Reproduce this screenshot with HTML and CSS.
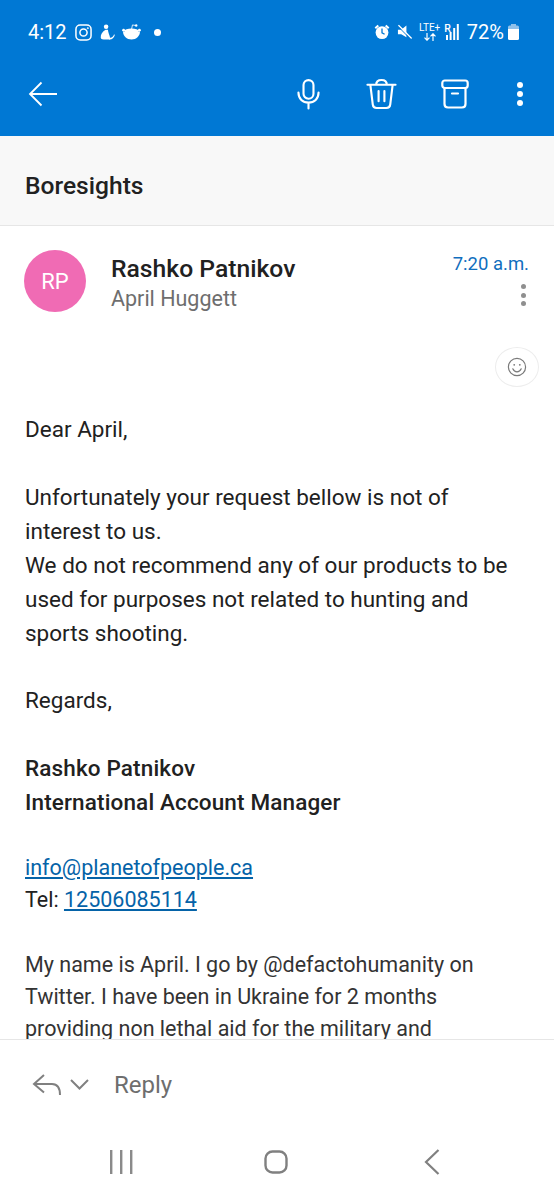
FILE: index.html

```html
<!DOCTYPE html>
<html lang="en">
<head>
  <meta charset="UTF-8">
  <meta name="viewport" content="width=device-width, initial-scale=1.0">
  <title>Boresights</title>
  <link rel="stylesheet" href="styles.css">
</head>
<body>
  <div class="phone">
    <header class="app-header">
      <div class="status-bar">
        <div class="status-left">
          <span class="status-time">4:12</span>
          <svg class="ic" width="17" height="17" viewBox="0 0 18 18" fill="none" stroke="#fff" stroke-width="1.6"><rect x="1" y="1" width="16" height="16" rx="4.5"/><circle cx="9" cy="9" r="3.8"/><circle cx="13.6" cy="4.4" r=".7" fill="#fff" stroke-width=".6"/></svg>
          <svg class="ic" width="15" height="16" viewBox="0 0 16 17" fill="#fff"><circle cx="6.5" cy="3" r="2.4"/><path d="M6 6 C2.5 8 .5 11 .8 14.5 C1 16 3 16.5 6 16.5 L10 16.5 C11.5 16.5 10.5 13 9.5 10.5 C9 9 8.5 7 8.5 6 Z"/><path d="M10 14.5 C12.5 15 14.2 13.5 15 11 L15.8 11.8 C15 15 12.5 17 9.5 16.5 Z"/></svg>
          <svg class="ic" width="19" height="16" viewBox="0 0 20 17" fill="#fff"><path d="M1 8 H19 C19 13 15 16.5 10 16.5 C5 16.5 1 13 1 8 Z"/><ellipse cx="10" cy="7.5" rx="7.5" ry="2.6"/><circle cx="1.6" cy="6.6" r="1.5"/><circle cx="18.4" cy="6.6" r="1.5"/><path d="M10 6 L11 1 L14.5 1.6" fill="none" stroke="#fff" stroke-width=".9"/><circle cx="15" cy="1.6" r="1.3"/></svg>
          <span class="status-dot"></span>
        </div>
        <div class="status-right">
          <svg class="ic" width="16" height="16" viewBox="0 0 16 16" fill="#fff"><circle cx="8" cy="8.6" r="6.4"/><path d="M.6 3.6 L3.6 .8 L5 2.2 L2 5 Z M15.4 3.6 L12.4 .8 L11 2.2 L14 5 Z"/><path d="M8 4.6 V8.8 L10.6 10.2" fill="none" stroke="#0078d4" stroke-width="1.3"/></svg>
          <svg class="ic mute" width="16" height="16" viewBox="0 0 17 16" fill="#fff"><path d="M1 5.5 H4.5 L10 1 V13.5 L4.5 10.5 H1 Z"/><path d="M1.5 .8 L15.5 15" stroke="#fff" stroke-width="1.6"/><path d="M.8 1.8 L14.8 16" stroke="#0078d4" stroke-width="1"/></svg>
          <span class="net"><span>LTE+</span><svg width="14" height="8" viewBox="0 0 14 8" fill="none" stroke="#fff" stroke-width="1.2"><path d="M4 0 V7 M1.5 4.6 L4 7.2 L6.5 4.6 M10 8 V1 M7.5 3.4 L10 .8 L12.5 3.4"/></svg></span>
          <span class="signal"><span class="r">R</span><svg width="14" height="16" viewBox="0 0 14 16" fill="#fff"><rect x="0" y="11" width="2" height="5"/><rect x="3.6" y="8" width="2" height="8"/><rect x="7.2" y="4" width="2" height="12"/><rect x="10.8" y="0" width="2" height="16"/></svg></span>
          <span class="status-batt">72%</span>
          <svg class="ic" width="11" height="16" viewBox="0 0 11 16"><path d="M3 0 H8 V1.5 H9.5 Q11 1.5 11 3 V5 H0 V3 Q0 1.5 1.5 1.5 H3 Z" fill="#8fc1ea"/><path d="M0 5 H11 V14.5 Q11 16 9.5 16 H1.5 Q0 16 0 14.5 Z" fill="#fff"/></svg>
        </div>
      </div>
      <div class="toolbar">
        <svg class="back" width="30" height="26" viewBox="0 0 30 26" fill="none" stroke="#fff" stroke-width="1.8"><path d="M29 13 H2 M13.5 1.5 L2 13 L13.5 24.5"/></svg>
        <div class="toolbar-actions">
          <svg width="23" height="32" viewBox="0 0 24 32" fill="none" stroke="#fff" stroke-width="2.2" stroke-linecap="round"><rect x="6.8" y="1.5" width="10.4" height="19.5" rx="5.2"/><path d="M1.5 14.5 C1.5 21 6 25 12 25 C18 25 22.5 21 22.5 14.5 M12 25 V31"/></svg>
          <svg width="31" height="32" viewBox="0 0 32 32" fill="none" stroke="#fff" stroke-width="2.2" stroke-linecap="round" stroke-linejoin="round"><path d="M1.5 6.5 H30.5 M10.5 6.5 C10.5 3 12.5 1.5 16 1.5 C19.5 1.5 21.5 3 21.5 6.5 M4.5 6.5 L7 27 C7.3 29.5 8.5 30.5 11 30.5 H21 C23.5 30.5 24.7 29.5 25 27 L27.5 6.5 M13 13 V23.5 M19 13 V23.5"/></svg>
          <svg class="archive" width="28" height="30" viewBox="0 0 28 30" fill="none" stroke="#fff" stroke-width="2.2" stroke-linecap="round" stroke-linejoin="round"><rect x="1.3" y="1.5" width="25.4" height="7.5" rx="2.5"/><path d="M3.5 9 V25 C3.5 27.5 5 28.5 7 28.5 H21 C23 28.5 24.5 27.5 24.5 25 V9 M11 14.5 H17"/></svg>
          <span class="dots"><i></i><i></i><i></i></span>
        </div>
      </div>
    </header>

    <div class="subject">Boresights</div>

    <div class="sender">
      <div class="avatar">RP</div>
      <div class="sender-info">
        <div class="sender-name">Rashko Patnikov</div>
        <div class="sender-to">April Huggett</div>
      </div>
      <div class="sender-meta">
        <div class="sender-time">7:20 a.m.</div>
        <span class="dots dots-grey"><i></i><i></i><i></i></span>
      </div>
    </div>

    <div class="react-row">
      <div class="react-btn">
        <svg width="20" height="20" viewBox="0 0 20 20" fill="none" stroke="#7a7a7a" stroke-width="1.2"><circle cx="10" cy="10" r="8.6"/><path d="M5.8 11.8 C6.8 14 8.3 14.8 10 14.8 C11.7 14.8 13.2 14 14.2 11.8" stroke-linecap="round"/><circle cx="7.2" cy="7.8" r=".9" fill="#7a7a7a" stroke="none"/><circle cx="12.8" cy="7.8" r=".9" fill="#7a7a7a" stroke="none"/></svg>
      </div>
    </div>

    <main class="mail-body">
      <p>Dear April,</p>
      <p class="tight">Unfortunately your request bellow is not of<br>interest to us.<br>We do not recommend any of our products to be<br>used for purposes not related to hunting and<br>sports shooting.</p>
      <p>Regards,</p>
      <p class="tight"><strong>Rashko Patnikov<br>International Account Manager</strong></p>
      <p class="contact tight"><a href="#">info@planetofpeople.ca</a><br>Tel: <a href="#">12506085114</a></p>
      <p class="quoted">My name is April. I go by @defactohumanity on<br>Twitter. I have been in Ukraine for 2 months<br>providing non lethal aid for the military and</p>
    </main>

    <footer class="reply-bar">
      <svg width="30" height="22" viewBox="0 0 30 22" fill="none" stroke="#808080" stroke-width="2"><path d="M12 1 L2 10 L12 18.5 M2 10 H20 C25 10 28 13.5 28 21"/></svg>
      <svg class="chev" width="19" height="11" viewBox="0 0 19 11" fill="none" stroke="#808080" stroke-width="2"><path d="M1 1 L9.5 9.5 L18 1"/></svg>
      <span class="reply-label">Reply</span>
    </footer>

    <nav class="nav-bar">
      <svg width="24" height="24" viewBox="0 0 24 24" fill="#8a8a8a"><rect x="1" y="0" width="2.4" height="24"/><rect x="11" y="0" width="2.4" height="24"/><rect x="21" y="0" width="2.4" height="24"/></svg>
      <svg width="24" height="24" viewBox="0 0 24 24" fill="none" stroke="#808080" stroke-width="2.4"><rect x="1.5" y="1.5" width="21" height="21" rx="7"/></svg>
      <svg class="nav-back" width="16" height="26" viewBox="0 0 16 26" fill="none" stroke="#808080" stroke-width="2.2"><path d="M14.5 1 L2 13 L14.5 25"/></svg>
    </nav>
  </div>
</body>
</html>
```

FILE: styles.css

```css
* {
  box-sizing: border-box;
}
body {
  margin: 0;
  background: #fff;
  font-family: Roboto, "Liberation Sans", sans-serif;
  color: #212121;
}
.phone {
  width: 554px;
  height: 1200px;
  display: flex;
  flex-direction: column;
  overflow: hidden;
}

/* Blue header */
.app-header {
  height: 136px;
  background-color: #0078d4;
  color: white;
  flex: 0 0 auto;
}
.status-bar {
  height: 54px;
  padding: 10px 35px 0 28px;
  display: flex;
  justify-content: space-between;
  align-items: center;
}
.status-left,
.status-right {
  display: flex;
  align-items: center;
}
.status-left .ic {
  margin-left: 8px;
}
.status-left .ic:last-of-type {
  margin-left: 7px;
}
.status-time {
  font-size: 20px;
}
.status-dot {
  width: 7px;
  height: 7px;
  margin-left: 13px;
  border-radius: 50%;
  background: white;
}
.status-right .mute {
  margin-left: 7px;
}
.net {
  display: flex;
  flex-direction: column;
  align-items: center;
  margin-left: 6px;
  font-size: 10px;
  line-height: 10px;
}
.signal {
  display: flex;
  align-items: flex-end;
  margin-left: 4px;
}
.signal .r {
  font-size: 10.5px;
  font-weight: 500;
  line-height: 10px;
  margin-right: -5px;
  align-self: flex-start;
}
.status-batt {
  font-size: 20px;
  margin: 0 4px 0 7px;
}
.toolbar {
  height: 80px;
  padding: 0 31px 0 28px;
  display: flex;
  justify-content: space-between;
  align-items: center;
}
.toolbar-actions {
  display: flex;
  align-items: center;
  gap: 46px;
}
.toolbar-actions .archive {
  margin: 0 2px 0 -2px;
}
.dots {
  display: flex;
  flex-direction: column;
  gap: 3px;
}
.dots i {
  display: block;
  width: 6px;
  height: 6px;
  border-radius: 50%;
  background: white;
}
.dots-grey {
  align-self: flex-end;
  margin: 8px 3px 0 0;
  gap: 3.5px;
}
.dots-grey i {
  width: 5px;
  height: 5px;
  background: #8f8f8f;
}

/* Subject */
.subject {
  height: 90px;
  padding: 10px 25px 0;
  display: flex;
  align-items: center;
  background: #f8f8f8;
  border-bottom: 1px solid #e6e6e6;
  font-size: 24.6px;
  font-weight: 500;
  flex: 0 0 auto;
}

/* Sender */
.sender {
  display: flex;
  padding: 24px 25px 0 24px;
  flex: 0 0 auto;
}
.avatar {
  width: 62px;
  height: 62px;
  border-radius: 50%;
  background: #f06bb4;
  color: white;
  font-size: 22px;
  display: flex;
  align-items: center;
  justify-content: center;
}
.sender-info {
  margin-left: 25px;
  flex: 1;
}
.sender-name {
  font-size: 24.7px;
  font-weight: 500;
  line-height: 30px;
  margin-top: 4px;
}
.sender-to {
  font-size: 21.5px;
  line-height: 30px;
  color: #6e6e6e;
}
.sender-meta {
  display: flex;
  flex-direction: column;
}
.sender-time {
  font-size: 18.5px;
  color: #106ebe;
  line-height: 24px;
  margin-top: 2px;
}

/* Reaction button */
.react-row {
  display: flex;
  justify-content: flex-end;
  padding: 33px 15px 0 0;
  flex: 0 0 auto;
}
.react-btn {
  width: 44px;
  height: 40px;
  border: 1px solid #ededed;
  border-radius: 50%;
  display: flex;
  align-items: center;
  justify-content: center;
}

/* Message */
.mail-body {
  flex: 1;
  min-height: 0;
  overflow: hidden;
  padding: 25px 25px 0;
  font-size: 22.5px;
  line-height: 34px;
}
.mail-body p {
  margin: 0 0 34px;
}
.mail-body p.tight {
  margin-bottom: 33px;
}
.mail-body strong {
  font-weight: 500;
  letter-spacing: .14px;
}
.mail-body a {
  color: #0563a8;
}
.contact {
  font-size: 21.5px;
  line-height: 32px;
}
.quoted {
  font-size: 21.5px;
  line-height: 32px;
  color: #333;
}

/* Bottom */
.reply-bar {
  height: 90px;
  padding: 0 0 0 32px;
  display: flex;
  align-items: center;
  border-top: 1px solid #e6e6e6;
  flex: 0 0 auto;
}
.chev {
  margin-left: 8px;
}
.reply-label {
  margin-left: 25px;
  font-size: 24px;
  color: #6e6e6e;
}
.nav-bar {
  height: 71px;
  padding: 0 0 5px 109px;
  display: flex;
  align-items: center;
  gap: 131px;
  flex: 0 0 auto;
}
.nav-back {
  margin-left: 5px;
}
```
